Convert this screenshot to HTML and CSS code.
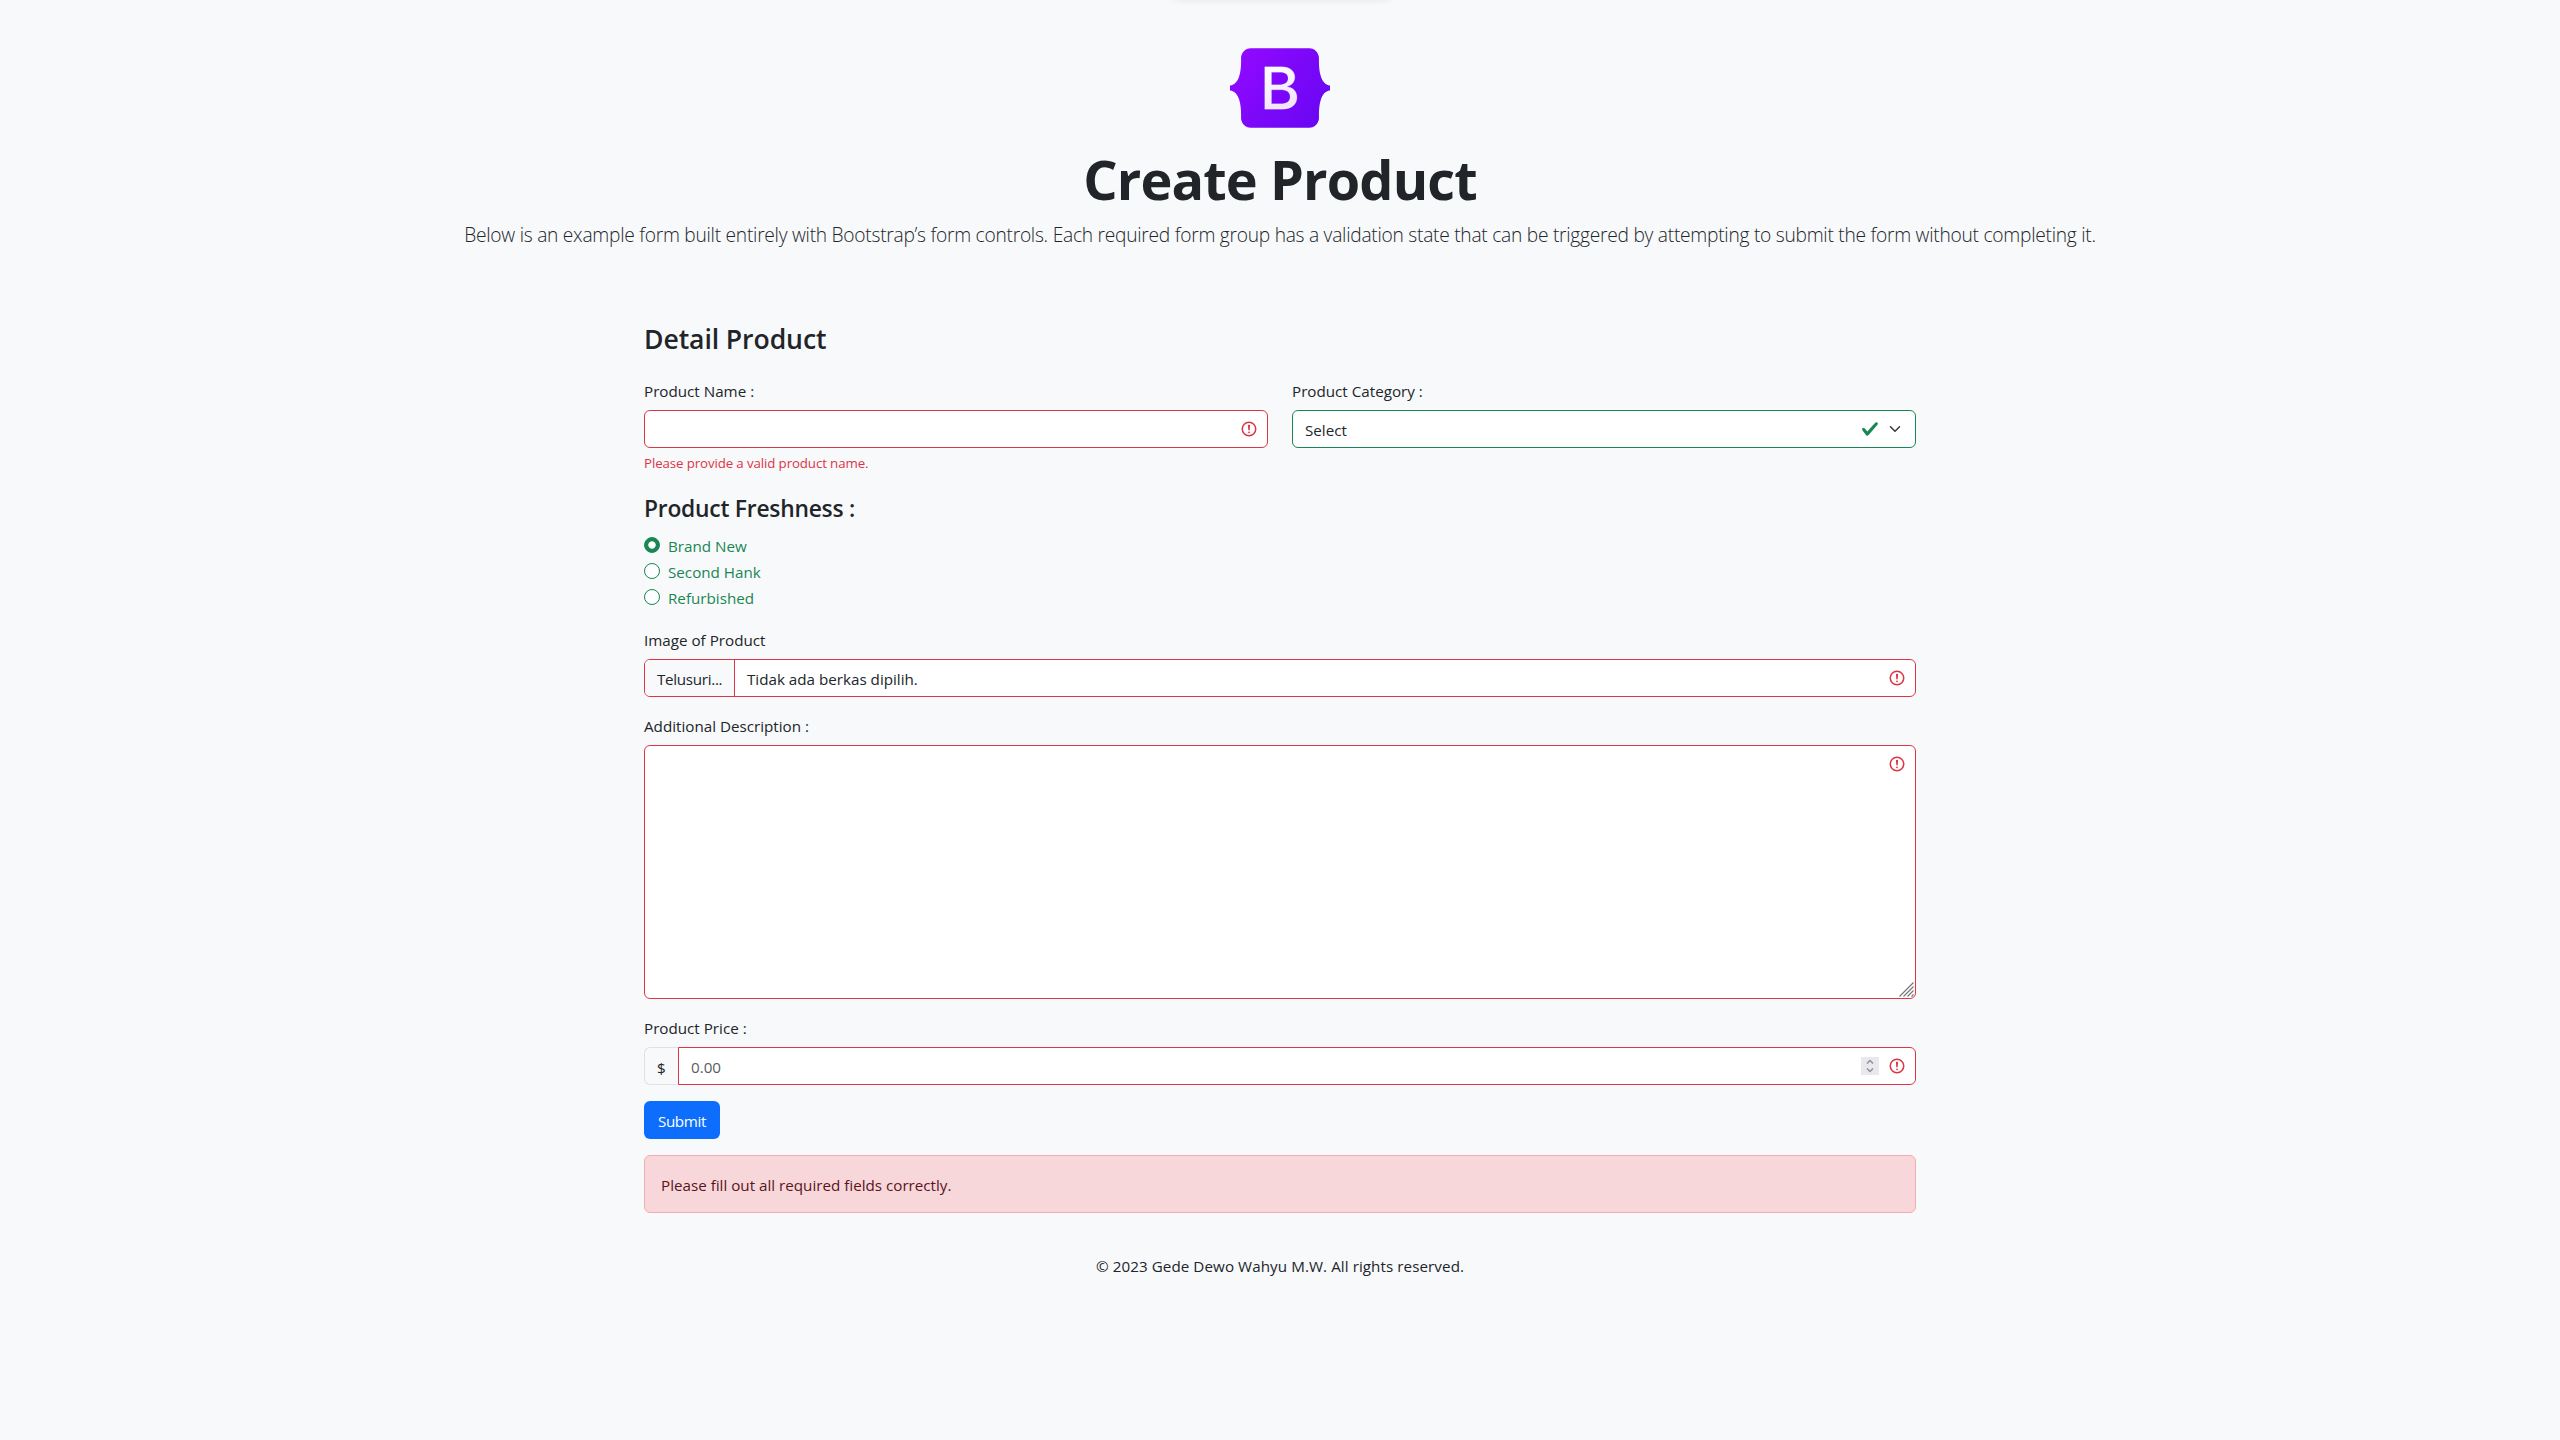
FILE: index.html
```html
<!DOCTYPE html>
<html lang="en">
<head>
<meta charset="utf-8">
<title>Create Product</title>
<link rel="stylesheet" href="styles.css">
</head>
<body>
<svg class="defs" width="0" height="0" aria-hidden="true">
  <symbol id="invalid" viewBox="0 0 12 12">
    <circle cx="6" cy="6" r="4.5" fill="none" stroke="#dc3545"/>
    <path d="M5.8 3.6h.4L6 6.5z" fill="none" stroke="#dc3545" stroke-linejoin="round"/>
    <circle cx="6" cy="8.2" r=".6" fill="#dc3545"/>
  </symbol>
</svg>
<div class="top-shade"></div>
<header class="intro">
  <svg class="logo" viewBox="0 0 512 408" role="img" aria-label="Bootstrap">
    <defs>
      <linearGradient id="body" x1="76" y1="11" x2="523" y2="366" gradientUnits="userSpaceOnUse"><stop stop-color="#9009ff"/><stop offset="1" stop-color="#6606f2"/></linearGradient>
      <linearGradient id="face" x1="194" y1="95" x2="300" y2="280" gradientUnits="userSpaceOnUse"><stop stop-color="#fff"/><stop offset="1" stop-color="#f1e5fc"/></linearGradient>
    </defs>
    <path fill="url(#body)" d="M56.481 53.32C55.515 25.58 77.128 0 106.342 0h299.353c29.214 0 50.827 25.58 49.861 53.32-.926 26.647.277 61.165 8.964 89.31 8.715 28.232 23.411 46.077 47.48 48.37v26c-24.069 2.293-38.765 20.138-47.48 48.37-8.687 28.145-9.89 62.663-8.964 89.31.966 27.74-20.647 53.32-49.861 53.32H106.342c-29.214 0-50.827-25.58-49.861-53.32.927-26.647-.276-61.165-8.964-89.31C38.802 237.138 24.069 219.293 0 217v-26c24.069-2.293 38.802-20.138 47.517-48.37 8.688-28.145 9.89-62.663 8.964-89.31z"/>
    <path fill="url(#face)" stroke="#fff" stroke-width="1" d="M267.103 312.457c47.297 0 75.798-23.158 75.798-61.355 0-28.873-20.336-49.776-50.532-53.085v-1.203c22.185-3.609 39.594-24.211 39.594-47.219 0-32.783-25.882-54.138-65.322-54.138h-88.74v217h89.202zm-54.692-189.48h45.911c24.958 0 39.131 11.128 39.131 31.279 0 21.505-16.484 33.535-46.372 33.535h-38.67v-64.814zm0 161.961v-71.431h45.602c32.661 0 49.608 12.03 49.608 35.49 0 23.459-16.484 35.941-47.605 35.941h-47.605z"/>
  </svg>
  <h1>Create Product</h1>
  <p class="lead">Below is an example form built entirely with Bootstrap’s form controls. Each required form group has a validation state that can be triggered by attempting to submit the form without completing it.</p>
</header>
<main class="form">
  <h3>Detail Product</h3>
  <div class="pair">
    <div class="field">
      <label>Product Name :</label>
      <div class="control invalid"><span class="value"></span><svg class="mark"><use href="#invalid"/></svg></div>
      <div class="feedback">Please provide a valid product name.</div>
    </div>
    <div class="field">
      <label>Product Category :</label>
      <div class="control valid">
        <span class="value">Select</span>
        <svg class="mark" viewBox="0 0 8 8"><path fill="#198754" d="M2.3 6.73.6 4.53c-.4-1.04.46-1.4 1.1-.8l1.1 1.4 3.4-3.8c.6-.63 1.6-.27 1.2.7l-4 4.6c-.43.5-.8.4-1.1.1z"/></svg>
        <svg class="caret" viewBox="0 0 16 16"><path fill="none" stroke="#343a40" stroke-linecap="round" stroke-linejoin="round" stroke-width="2" d="m2 5 6 6 6-6"/></svg>
      </div>
    </div>
  </div>
  <div class="freshness">
    <h4>Product Freshness :</h4>
    <div class="choice"><span class="radio checked"></span>Brand New</div>
    <div class="choice"><span class="radio"></span>Second Hank</div>
    <div class="choice"><span class="radio"></span>Refurbished</div>
  </div>
  <div class="field">
    <label>Image of Product</label>
    <div class="control invalid file"><span class="browse">Telusuri...</span><span class="value">Tidak ada berkas dipilih.</span><svg class="mark"><use href="#invalid"/></svg></div>
  </div>
  <div class="field">
    <label>Additional Description :</label>
    <div class="control invalid area">
      <span class="value"></span>
      <svg class="mark"><use href="#invalid"/></svg>
      <svg class="grip" viewBox="0 0 15 15"><path fill="none" stroke="#777" stroke-width="1.15" d="M.5 14.5l14-14M4.5 14.5l10-10M8.5 14.5l6-6M12.5 14.5l2-2"/></svg>
    </div>
  </div>
  <div class="field">
    <label>Product Price :</label>
    <div class="group">
      <span class="addon">$</span>
      <div class="control invalid price">
        <span class="value">0.00</span>
        <svg class="spin" viewBox="0 0 18 18"><path fill="#e9e9ed" d="M0 0h18v18H0z"/><path fill="none" stroke="#8f8f9d" stroke-width="1.5" d="M6 6.5l3-3 3 3M6 11.500l3 3 3-3"/></svg>
        <svg class="mark"><use href="#invalid"/></svg>
      </div>
    </div>
  </div>
  <button class="submit" type="button">Submit</button>
  <div class="alert">Please fill out all required fields correctly.</div>
</main>
<footer>© 2023 Gede Dewo Wahyu M.W. All rights reserved.</footer>
</body>
</html>
```
FILE: styles.css
```css
* { box-sizing: border-box; }
body {
  margin: 0;
  min-height: 1440px;
  background: #f8f9fb;
  color: #212529;
  font: 400 15.2px/24px "Open Sans", "Noto Sans", sans-serif;
}
h1, h3, h4, p { margin: 0; }
svg { display: block; flex: none; }
.defs { position: absolute; }
.top-shade {
  position: absolute;
  top: -12px;
  left: 1174px;
  width: 216px;
  height: 10px;
  box-shadow: 0 0 10px rgba(0, 0, 0, .12);
}

.intro {
  display: flex;
  flex-direction: column;
  align-items: center;
  padding-top: 48px;
}
.logo { width: 100px; height: 80px; margin-bottom: 18px; }
h1 { font-size: 54px; line-height: 67px; font-weight: 700; letter-spacing: -.85px; }
.lead {
  margin-top: 7px;
  font-size: 19.2px;
  line-height: 30px;
  font-weight: 300;
  letter-spacing: -.262px;
  white-space: nowrap;
}

.form { width: 1272px; margin: 72px auto 0; }
h3 { font-size: 26.6px; line-height: 34px; font-weight: 600; letter-spacing: -.09px; margin-bottom: 22px; }
.pair { display: grid; grid-template-columns: 1fr 1fr; gap: 24px; margin-bottom: 20px; }
.field { margin-bottom: 16px; }
.pair .field { margin: 0; }
label { display: block; margin-bottom: 8px; padding-top: 1px; height: 24px; }
.control {
  display: flex;
  align-items: center;
  height: 38px;
  padding: 0 9px 0 12px;
  border: 1px solid #dc3545;
  border-radius: 6px;
  background: #fff;
}
.control.valid { border-color: #198754; padding-right: 12px; }
.value { flex: 1; padding-top: 2px; }
.mark { width: 18px; height: 18px; }
.caret { width: 16px; height: 12px; margin-left: 8px; }
.feedback { margin-top: 5px; font-size: 13.3px; line-height: 21px; letter-spacing: -.115px; color: #dc3545; }

.freshness { margin-bottom: 18px; }
h4 { font-size: 22.8px; line-height: 29px; font-weight: 600; letter-spacing: -.23px; margin-bottom: 10px; }
.choice { display: flex; align-items: center; height: 24px; padding-top: 1px; margin-bottom: 2px; gap: 8px; color: #198754; }
.radio { width: 16px; height: 16px; margin-top: -1px; border: 1px solid #198754; border-radius: 50%; background: #fff; }
.radio.checked { background: radial-gradient(circle, #fff 3.3px, #198754 4.1px); }

.file { padding-left: 0; }
.browse {
  align-self: stretch;
  width: 90px;
  margin-right: 12px;
  padding: 7px 0 0 12px;
  border-right: 1px solid #dc3545;
  border-radius: 5px 0 0 5px;
  background: #f8f9fb;
  letter-spacing: -.3px;
}
.area { position: relative; height: 254px; align-items: flex-start; padding-top: 9px; }
.grip { position: absolute; right: 1px; bottom: 1px; width: 15px; height: 15px; }

.group { display: flex; }
.addon { width: 34px; height: 38px; padding: 8px 0 0 12px; border: 1px solid #dee2e6; border-right: 0; border-radius: 6px 0 0 6px; background: #f8f9fb; }
.price { flex: 1; border-radius: 0 6px 6px 0; }
.price .value { color: #595c5f; }
.spin { width: 18px; height: 18px; margin-right: 9px; }

.submit {
  display: block;
  width: 76px;
  height: 38px;
  padding: 2px 0 0;
  border: 0;
  border-radius: 6px;
  background: #0d6efd;
  color: #fff;
  font: inherit;
  letter-spacing: -.35px;
}
.alert { height: 58px; margin-top: 16px; padding: 17px 16px; border: 1px solid #f1aeb5; border-radius: 6px; background: #f8d7da; color: #58151c; }
footer { margin-top: 41px; text-align: center; letter-spacing: .07px; }
```
